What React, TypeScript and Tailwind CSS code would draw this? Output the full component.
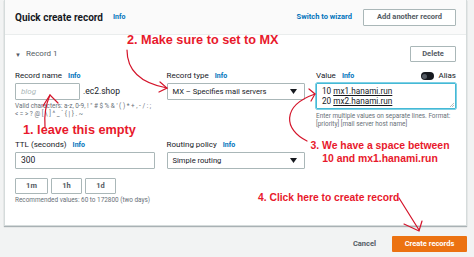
import React from 'react';

const ui = { fontFamily: 'Roboto, "Open Sans", sans-serif' };
const red = { fontFamily: '"Liberation Sans", Arial, sans-serif' };

function Info() {
    return <span className="ml-[6px] text-[7px] font-bold text-[#0073bb]">Info</span>;
}

function Label({ children }: { children: React.ReactNode }) {
    return (
        <div className="h-[10px] flex items-center text-[8px] text-[#16191f] leading-none">
            {children}
            <Info />
        </div>
    );
}

function Caret() {
    return (
        <svg width="7" height="5" viewBox="0 0 7 5" className="shrink-0">
            <path d="M0 0 L7 0 L3.5 5 Z" fill="#16191f" />
        </svg>
    );
}

function Select({ value }: { value: string }) {
    return (
        <div className="mt-[2px] h-[17px] flex items-center justify-between border border-[#aab7b8] rounded-[1px] pl-[5px] pr-[7px] text-[7.6px] text-[#16191f]">
            <span>{value}</span>
            <Caret />
        </div>
    );
}

function SmallButton({ children, w }: { children: React.ReactNode; w: string }) {
    return (
        <div className={`${w} h-[16px] flex items-center justify-center border border-[#aab7b8] rounded-[1px] text-[7.5px] font-bold text-[#545b64]`}>
            {children}
        </div>
    );
}

function Annotations() {
    return (
        <>
            <div style={red} className="absolute left-[127px] top-[34px] text-[12.7px] font-bold text-[#e8192c] leading-none whitespace-nowrap">
                2. Make sure to set to MX
            </div>
            <div style={red} className="absolute left-[23px] top-[124px] text-[12.7px] font-bold text-[#e8192c] leading-none whitespace-nowrap">
                1. leave this empty
            </div>
            <div style={red} className="absolute left-[306px] top-[139px] w-[148px] text-center text-[10.4px] font-bold text-[#e8192c] leading-[13px] whitespace-nowrap">
                3. We have a space between
                <br />
                10 and mx1.hanami.run
            </div>
            <div style={red} className="absolute left-[258px] top-[193px] text-[10.3px] font-bold text-[#e8192c] leading-none whitespace-nowrap">
                4. Click here to create record
            </div>
            <svg className="absolute left-0 top-0 pointer-events-none" width="474" height="257" viewBox="0 0 474 257" fill="none" stroke="#d4142a" strokeWidth="1.2" strokeLinecap="round">
                <path d="M127 50 C127 70 140 83 167 88" />
                <path d="M160 82 L167 88 L159 92" />
                <path d="M45 127 C44 115 46 104 50 95" />
                <path d="M43 106 L50 95 L58 103" />
                <path d="M307 141 C284 130 281 106 315 94" />
                <path d="M309 89 L315 94 L311 101" />
                <path d="M399 198 L419 230" />
                <path d="M404 224 L419 231 L422 221" />
            </svg>
        </>
    );
}

export default function App() {
    return (
        <div style={ui} className="relative w-[474px] h-[257px] overflow-hidden bg-[#f2f3f3]">
            <div className="ml-[4px] w-[463px] bg-white border-x border-b border-[#d5dbdb] shadow-[0_1px_1px_rgba(0,28,36,0.3)]">
                <div className="h-[35px] flex items-center justify-between px-[10px] bg-[#fafafa] border-b border-[#eaeded]">
                    <div className="flex items-center">
                        <span className="text-[10px] font-bold text-[#16191f]">Quick create record</span>
                        <span className="ml-[10px] text-[7px] font-bold text-[#0073bb]">Info</span>
                    </div>
                    <div className="flex items-center">
                        <span className="text-[7.5px] font-bold text-[#0073bb]">Switch to wizard</span>
                        <div className="ml-[11px] w-[93px] h-[17px] flex items-center justify-center border border-[#aab7b8] rounded-[1px] bg-white text-[7.5px] font-bold text-[#545b64]">
                            Add another record
                        </div>
                    </div>
                </div>

                <div className="px-[10px] pt-[11px] pb-[20px]">
                    <div className="h-[16px] flex items-center justify-between">
                        <div className="flex items-center text-[8px] text-[#545b64]">
                            <span className="text-[6px] mr-[5px]">▼</span>
                            Record 1
                        </div>
                        <SmallButton w="w-[46px]">Delete</SmallButton>
                    </div>

                    <div className="mt-[9px] grid grid-cols-[140px_138px_140px] gap-x-[11.5px]">
                        <div>
                            <Label>Record name</Label>
                            <div className="mt-[2px] flex items-center">
                                <div className="w-[65px] h-[17px] flex items-center border border-[#aab7b8] rounded-[1px] pl-[5px] text-[8px] italic text-[#aab7b8]">
                                    blog
                                </div>
                                <span className="ml-[3px] text-[8.5px] text-[#16191f]">.ec2.shop</span>
                            </div>
                            <div className="mt-[3px] text-[6.4px] leading-[7.5px] text-[#687078]">
                                Valid characters: a-z, 0-9, ! " # $ % &amp; ' ( ) * + , - / : ; &lt; = &gt; ? @ [ \ ] ^ _ ` {'{'} | {'}'} . ~
                            </div>
                        </div>
                        <div>
                            <Label>Record type</Label>
                            <Select value="MX – Specifies mail servers" />
                        </div>
                        <div>
                            <div className="h-[10px] flex items-center justify-between">
                                <div className="flex items-center text-[8px] text-[#16191f] leading-none">
                                    Value
                                    <Info />
                                </div>
                                <div className="flex items-center">
                                    <div className="w-[13px] h-[8px] rounded-full bg-[#16191f] flex items-center pl-[1px]">
                                        <div className="w-[5px] h-[5px] rounded-full bg-[#545b64]" />
                                    </div>
                                    <span className="ml-[4px] text-[8px] text-[#16191f]">Alias</span>
                                </div>
                            </div>
                            <div className="relative mt-[2px] h-[26px] border border-[#44b9d6] rounded-[1px] shadow-[0_0_0_0.5px_#00a1c9] px-[5px] pt-[2px] text-[8.2px] leading-[10px] text-[#16191f]">
                                <div>10 <span className="underline decoration-[#16191f]">mx1.hanami.run</span></div>
                                <div>20 <span className="underline decoration-[#16191f]">mx2.hanami.run</span></div>
                                <svg className="absolute right-[1px] bottom-[1px]" width="4" height="4" viewBox="0 0 4 4">
                                    <path d="M4 0 L0 4 M4 2 L2 4" stroke="#879596" strokeWidth="0.6" />
                                </svg>
                            </div>
                            <div className="mt-[4px] text-[6.4px] leading-[7.5px] text-[#687078]">
                                Enter multiple values on separate lines. Format: [priority] [mail server host name]
                            </div>
                        </div>
                    </div>

                    <div className="mt-[12px] grid grid-cols-[140px_138px_140px] gap-x-[11.5px]">
                        <div>
                            <Label>TTL (seconds)</Label>
                            <div className="mt-[2px] h-[17px] flex items-center border border-[#aab7b8] rounded-[1px] pl-[5px] text-[8.5px] text-[#16191f]">
                                300
                            </div>
                            <div className="mt-[9px] flex gap-[3px]">
                                <SmallButton w="w-[33px]">1m</SmallButton>
                                <SmallButton w="w-[31px]">1h</SmallButton>
                                <SmallButton w="w-[31px]">1d</SmallButton>
                            </div>
                            <div className="mt-[3px] text-[6.4px] leading-[7.5px] text-[#687078] whitespace-nowrap">
                                Recommended values: 60 to 172800 (two days)
                            </div>
                        </div>
                        <div>
                            <Label>Routing policy</Label>
                            <Select value="Simple routing" />
                        </div>
                        <div />
                    </div>
                </div>
            </div>

            <div className="mt-[10px] pr-[7px] flex items-center justify-end">
                <span className="mr-[16px] text-[7.5px] font-bold text-[#545b64]">Cancel</span>
                <div className="w-[75px] h-[16px] flex items-center justify-center bg-[#ec7211] rounded-[1px] text-[7.5px] font-bold text-white">
                    Create records
                </div>
            </div>

            <Annotations />
        </div>
    );
}
